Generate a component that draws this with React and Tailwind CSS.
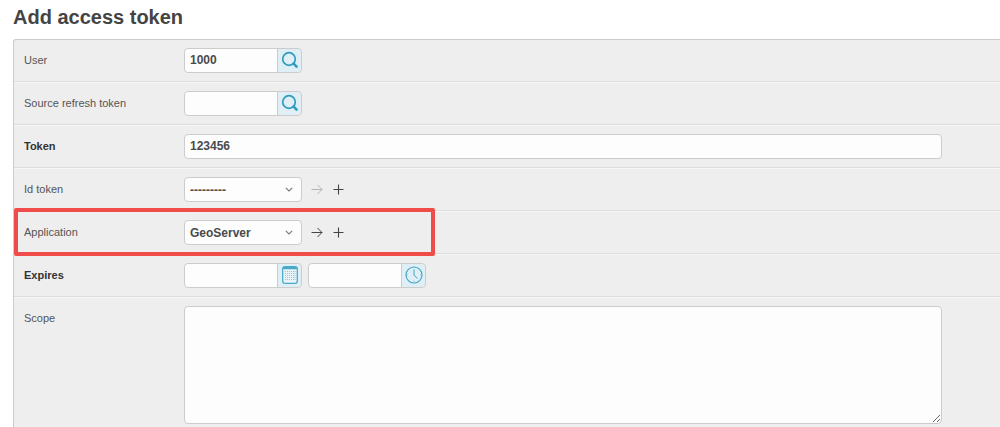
import React from "react";

const SearchIcon = () => (
  <svg width="18" height="18" viewBox="0 0 18 18" fill="none">
    <circle cx="8" cy="8" r="6.3" stroke="#2f9dbf" strokeWidth="1.7" />
    <path d="M12.6 12.6l3 3" stroke="#2f9dbf" strokeWidth="2.6" strokeLinecap="round" />
  </svg>
);

const CalendarIcon = () => (
  <svg width="16" height="18" viewBox="0 0 16 18" fill="none">
    <rect x="0.7" y="0.7" width="14.6" height="16.6" rx="2.4" fill="#e9f4f8" stroke="#4aa9c8" strokeWidth="1.3" />
    <rect x="1" y="1" width="14" height="2.2" rx="1" fill="#4aa9c8" />
    <path d="M3.5 5v10M5.5 5v10M7.5 5v10M9.5 5v10M11.5 5v10M13 5v10" stroke="#8cc8dd" strokeWidth="1" strokeDasharray="1 1" />
  </svg>
);

const ClockIcon = () => (
  <svg width="18" height="18" viewBox="0 0 18 18" fill="none">
    <circle cx="9" cy="9" r="8" stroke="#3ba3c4" strokeWidth="1.1" />
    <path d="M9 3.5V9.2l3.4 3.2" stroke="#3ba3c4" strokeWidth="1" />
    <path d="M9 14.5v1M3 9h-.8M15 9h.8" stroke="#7cc0d8" strokeWidth="1" />
  </svg>
);

const ArrowIcon = ({ muted }) => (
  <svg width="12" height="11" viewBox="0 0 12 11" fill="none" stroke={muted ? "#b4b4b4" : "#444444"} strokeWidth="1">
    <path d="M0.5 5.5h10.5M6.5 1l4.5 4.5-4.5 4.5" />
  </svg>
);

const PlusIcon = () => (
  <svg width="11" height="11" viewBox="0 0 11 11" fill="none" stroke="#444444" strokeWidth="1.1">
    <path d="M5.5 0.5v10M0.5 5.5h10" />
  </svg>
);

const Chevron = () => (
  <svg width="8" height="5" viewBox="0 0 8 5" fill="none" stroke="#777777" strokeWidth="1.1">
    <path d="M0.8 0.8L4 4l3.2-3.2" />
  </svg>
);

const InputAddon = ({ value, children }) => (
  <div className="flex h-[25px] w-[118px] rounded-[4px] border border-[#ccc]">
    <div className="flex w-[92px] items-center rounded-l-[4px] bg-[#fdfdfd] pl-[5px] text-[12px] font-bold text-[#4a4a4a]">
      {value}
    </div>
    <div className="flex flex-1 items-center justify-center rounded-r-[4px] border-l border-[#ccc] bg-[#dfeff5]">
      {children}
    </div>
  </div>
);

const SelectBox = ({ value, muted }) => (
  <div className="flex items-center gap-[9px]">
    <div className="flex h-[25px] w-[118px] items-center justify-between rounded-[4px] border border-[#ccc] bg-[#fdfdfd] pl-[5px] pr-[8px] text-[12px] font-bold text-[#4a4a4a]">
      <span className="pt-[1px]">{value}</span>
      <Chevron />
    </div>
    <ArrowIcon muted={muted} />
    <span className="ml-[1px] flex">
      <PlusIcon />
    </span>
  </div>
);

const Row = ({ label, bold, children }) => (
  <div className="flex h-[43px] items-center border-b border-[#ddd] shadow-[0_1px_0_#f6f6f6]">
    <div className={`w-[170px] pl-[10px] text-[11px] ${bold ? "font-bold text-[#333]" : "text-[#555]"}`}>
      {label}
    </div>
    {children}
  </div>
);

export default function App() {
  return (
    <div className="relative h-[427px] w-[1000px] overflow-hidden bg-white font-['Liberation_Sans',Arial,sans-serif]">
      <h1 className="pl-[13px] pt-[6px] text-[20px] font-bold leading-[22px] text-[#444]">Add access token</h1>
      <div className="ml-[13px] mt-[11px] h-[400px] rounded-tl-[3px] border-l border-t border-[#ccc] bg-[#eee]">
        <div className="-mt-[1px]">
          <Row label="User">
            <InputAddon value="1000">
              <SearchIcon />
            </InputAddon>
          </Row>
          <Row label="Source refresh token">
            <InputAddon value="">
              <SearchIcon />
            </InputAddon>
          </Row>
          <Row label="Token" bold>
            <div className="flex h-[25px] w-[758px] items-center rounded-[4px] border border-[#ccc] bg-[#fdfdfd] pl-[5px] text-[12px] font-bold text-[#4a4a4a]">
              123456
            </div>
          </Row>
          <Row label="Id token">
            <SelectBox value="---------" muted />
          </Row>
          <Row label="Application">
            <SelectBox value="GeoServer" />
          </Row>
          <Row label="Expires" bold>
            <div className="flex gap-[6px]">
              <InputAddon value="">
                <CalendarIcon />
              </InputAddon>
              <InputAddon value="">
                <ClockIcon />
              </InputAddon>
            </div>
          </Row>
          <div className="flex pt-[9px]">
            <div className="w-[170px] pl-[10px] pt-[6px] text-[11px] leading-[13px] text-[#555]">Scope</div>
            <textarea
              readOnly
              className="h-[118px] w-[758px] rounded-[4px] border border-[#ccc] bg-[#fdfdfd] outline-none"
            />
          </div>
        </div>
      </div>
      <div className="absolute left-[14px] top-[208px] h-[48px] w-[421px] rounded-[2px] border-4 border-[#ef4d4a]" />
    </div>
  );
}
